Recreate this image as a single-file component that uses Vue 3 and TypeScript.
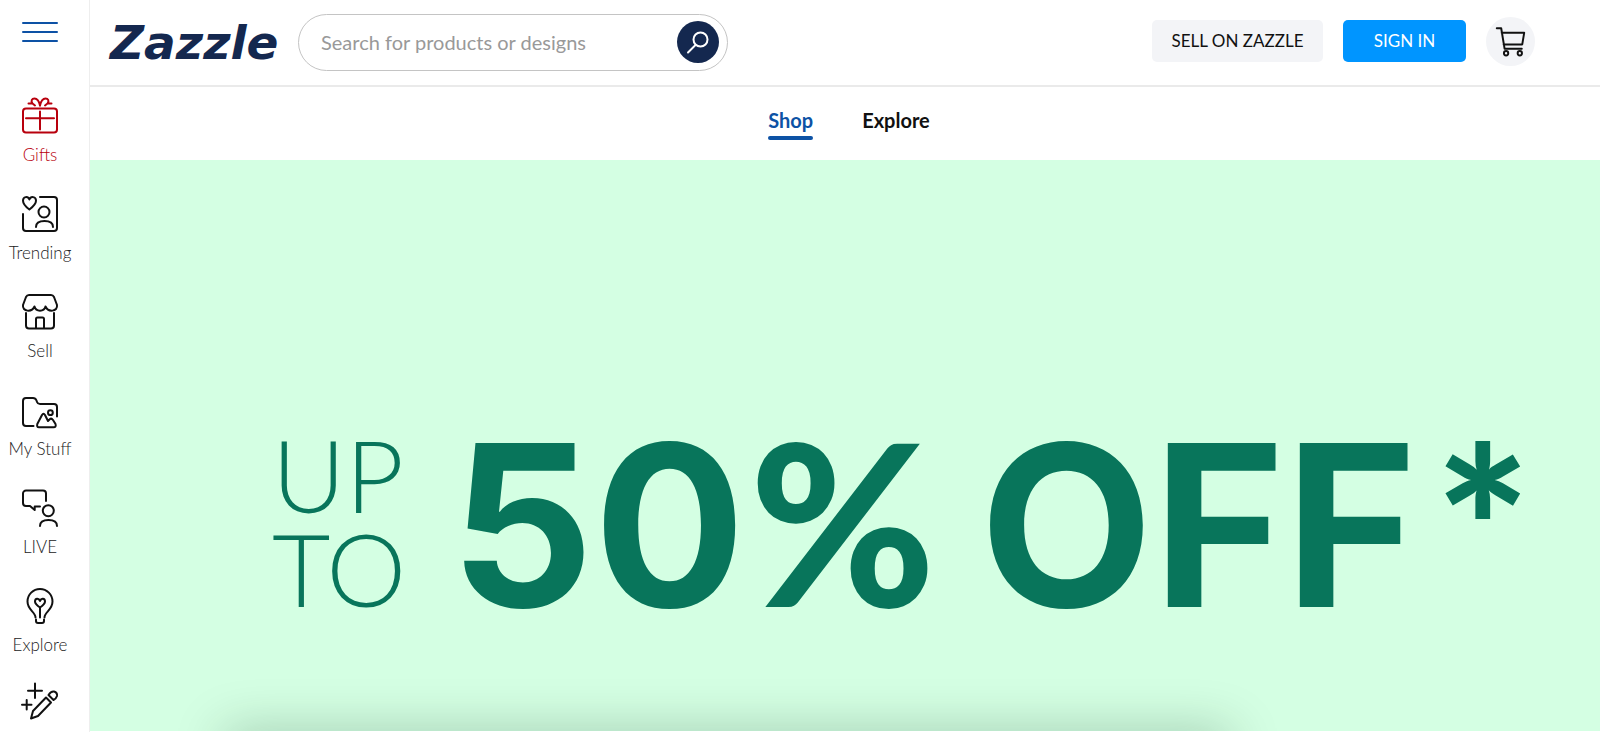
<script setup lang="ts">
import { ref } from 'vue'

interface RailItem {
  label: string
  iconOnly?: boolean
  accent?: boolean
  paths: string[]
}

const query = ref('')

const railItems: RailItem[] = [
  {
    label: 'Gifts',
    accent: true,
    paths: [
      'M6 12.5H34a3 3 0 0 1 3 3V33.500a3 3 0 0 1-3 3H6a3 3 0 0 1-3-3V15.500a3 3 0 0 1 3-3Z',
      'M6 22.300H34M20 15.500V33.500',
      'M20 9.500C19 5 17 2.500 14.500 2.500C12 2.500 10.500 4.500 12.500 7.500L15 9.500M8.500 7.500H12.500',
      'M20 9.500C21 5 23 2.500 25.500 2.500C28 2.500 29.500 4.500 27.500 7.500L25 9.500M31.500 7.500H27.500',
    ],
  },
  {
    label: 'Trending',
    paths: [
      'M9.400 15.500C5.500 12.500 3 10 3 6.700C3 2.500 8 1.800 9.400 5.500C10.800 1.800 16 2.500 16 6.700C16 10 13.300 12.500 9.400 15.500Z',
      'M20 3H34a3 3 0 0 1 3 3V34a3 3 0 0 1-3 3H6a3 3 0 0 1-3-3V20',
      'M18.500 18a5.500 5.500 0 1 0 11 0a5.500 5.500 0 1 0-11 0',
      'M16 33C16 29 19.500 27 24.500 27S33 29 33 33',
    ],
  },
  {
    label: 'Sell',
    paths: [
      'M3 13L6 5Q7 3 9 3H31Q33 3 34 5L37 13C38 20 28 20.500 25.500 14.500C24 20 16 20 14.500 14.500C12 20.500 2 20 3 13Z',
      'M6 21V33.500a3 3 0 0 0 3 3H31a3 3 0 0 0 3-3V21',
      'M16 36V27Q16 25.500 17.500 25.500H22.500Q24 25.500 24 27V36',
    ],
  },
  {
    label: 'My Stuff',
    paths: [
      'M13.500 36H6a3 3 0 0 1-3-3V11a3 3 0 0 1 3-3H13Q15.500 8 16.500 10.500L17 12Q17.700 14 20 14H34a3 3 0 0 1 3 3V26.500',
      'M17.300 34L22 25Q23.500 22.500 25 25L28 31L30 29Q31.500 28 33 30L35.500 34Q36.500 37.300 33.500 37.300H19Q16.500 37.300 17.300 34Z',
      'M28 22.700a2.400 2.400 0 1 0 4.800 0a2.400 2.400 0 1 0-4.800 0',
    ],
  },
  {
    label: 'LIVE',
    paths: [
      'M26 13V5.500a3 3 0 0 0-3-3H6a3 3 0 0 0-3 3V15a3 3 0 0 0 3 3H10L14.700 22V18.500H20',
      'M22.800 22.700a5.500 5.500 0 1 0 11 0a5.500 5.500 0 1 0-11 0',
      'M20 38C20 34 23 32 28.500 32S37 34 37 38',
    ],
  },
  {
    label: 'Explore',
    paths: [
      'M15.500 31.500C15.500 26 7.500 24 7.500 15.500a12.500 12.500 0 0 1 25 0C32.500 24 24.500 26 24.500 31.500',
      'M20 21.500C17 19.500 15 18 15 15.500C15 12 19 12 20 15C21 12 25 12 25 15.500C25 18 23 19.500 20 21.500V31.500',
      'M16 33.500V35Q16 37 18 37H22Q24 37 24 35V33.500',
    ],
  },
  {
    label: 'Create',
    iconOnly: true,
    paths: [
      'M15 -.500V14M8 6.700H22M6.700 16V25.500M2 20.700H11.500',
      'M11 34.500L13 27L26 13.500L31 18.500L18 32L11 34.500Z',
      'M28.500 11Q31 7 34 7.500Q37.500 8.500 37 12Q36 15 33.500 16L28.500 11Z',
    ],
  },
]

const tabs = [
  { label: 'Shop', active: true },
  { label: 'Explore', active: false },
]
</script>

<template>
  <div class="page">
    <aside class="rail">
      <button class="menu" type="button" aria-label="Menu">
        <span></span><span></span><span></span>
      </button>
      <nav class="rail-nav" aria-label="Sections">
        <a
          v-for="item in railItems"
          :key="item.label"
          href="#"
          class="rail-item"
          :class="{ accent: item.accent }"
          :aria-label="item.label"
        >
          <svg viewBox="0 0 40 40" aria-hidden="true">
            <path v-for="d in item.paths" :key="d" :d="d" />
          </svg>
          <span v-if="!item.iconOnly">{{ item.label }}</span>
        </a>
      </nav>
    </aside>

    <div class="main">
      <header class="topbar">
        <a class="logo" href="#">Zazzle</a>
        <form class="search" role="search" @submit.prevent>
          <input
            v-model="query"
            type="text"
            aria-label="Search for products or designs"
            placeholder="Search for products or designs"
          />
          <button type="submit" aria-label="Search">
            <svg viewBox="0 0 42 42" aria-hidden="true">
              <circle cx="23.500" cy="18.500" r="7" />
              <path d="M18.500 24L11 31.500" />
            </svg>
          </button>
        </form>
        <div class="actions">
          <button class="btn sell" type="button">SELL ON ZAZZLE</button>
          <button class="btn signin" type="button">SIGN IN</button>
          <button class="cart" type="button" aria-label="Cart">
            <svg viewBox="0 0 50 50" aria-hidden="true">
              <path d="M11 11.500H15.500L19 32.500H36.500M16 16H39L37 28H18" />
              <circle cx="20.500" cy="37" r="2.200" />
              <circle cx="34.500" cy="37" r="2.200" />
            </svg>
          </button>
        </div>
      </header>

      <nav class="tabs" aria-label="Browse">
        <a v-for="tab in tabs" :key="tab.label" href="#" :class="{ active: tab.active }">{{ tab.label }}</a>
      </nav>

      <section class="hero">
        <h1>
          <span class="upto">UP<br />TO</span>
          <span class="amount">50<span class="percent">%</span></span>
          <span class="off">OFF</span>
          <span class="star">*</span>
        </h1>
        <div class="shade" aria-hidden="true"></div>
      </section>
    </div>
  </div>
</template>

<style>
body {
  margin: 0;
  background: #fff;
}
</style>

<style scoped>
.page {
  display: flex;
  height: 100vh;
  overflow: hidden;
  background: #fff;
  color: #111;
  font-family: Lato, "Open Sans", "Liberation Sans", sans-serif;
}
a {
  color: inherit;
  text-decoration: none;
}
button {
  font: inherit;
  border: 0;
  padding: 0;
  cursor: pointer;
}
svg {
  display: block;
  fill: none;
  stroke: currentColor;
  stroke-width: 2;
  stroke-linecap: round;
  stroke-linejoin: round;
  overflow: visible;
}
.rail {
  box-sizing: border-box;
  flex: none;
  width: 90px;
  padding-right: 9px;
  border-right: 1px solid #eee;
  overflow: hidden;
}
.menu {
  display: flex;
  flex-direction: column;
  gap: 7px;
  width: 36px;
  margin: 22px auto 54px 22px;
  background: none;
}
.menu span {
  height: 2px;
  border-radius: 1px;
  background: #0d52a5;
}
.rail-item {
  display: flex;
  flex-direction: column;
  align-items: center;
  gap: 8px;
  height: 98px;
  color: #111;
}
.rail-item svg {
  flex: none;
  width: 40px;
  height: 40px;
}
.rail-item span {
  font-size: 17px;
  line-height: 22px;
  font-weight: 300;
  color: #222;
}
.rail-item.accent,
.rail-item.accent span {
  color: #b8000d;
}
.main {
  display: flex;
  flex: 1;
  flex-direction: column;
  min-width: 0;
  padding-bottom: 1px;
}
.topbar {
  box-sizing: border-box;
  flex: none;
  display: flex;
  align-items: center;
  height: 87px;
  padding: 0 65px 3px 20px;
  border-bottom: 2px solid #eaeaea;
}
.logo {
  width: 188px;
  padding-top: 4px;
  font-family: "DejaVu Sans", sans-serif;
  font-size: 47px;
  line-height: 56px;
  font-weight: 700;
  font-style: italic;
  color: #14284f;
}
.search {
  box-sizing: border-box;
  display: flex;
  align-items: center;
  width: 430px;
  height: 57px;
  margin-top: 2px;
  padding: 0 8px 0 22px;
  border: 1px solid #c4c4c4;
  border-radius: 29px;
}
.search input {
  flex: 1;
  min-width: 0;
  padding: 0;
  border: 0;
  outline: 0;
  background: none;
  font: 400 20px/24px Lato, "Open Sans", sans-serif;
  color: #111;
}
.search input::placeholder {
  color: #999;
  opacity: 1;
}
.search button {
  width: 42px;
  height: 42px;
  border-radius: 50%;
  background: #14284f;
  color: #fff;
}
.actions {
  display: flex;
  align-items: center;
  gap: 20px;
  margin-left: auto;
}
.btn {
  height: 42px;
  border-radius: 5px;
  font-size: 17px;
  line-height: 20px;
}
.sell {
  width: 171px;
  background: #f3f4f7;
  color: #111;
}
.signin {
  width: 123px;
  background: #0095ff;
  color: #fff;
}
.cart {
  width: 49px;
  height: 49px;
  border-radius: 50%;
  background: #f3f4f7;
  color: #111;
}
.tabs {
  flex: none;
  display: flex;
  justify-content: center;
  align-items: flex-start;
  gap: 49px;
  height: 53px;
  padding: 20px 0 0 8px;
}
.tabs a {
  font-size: 20px;
  line-height: 26px;
  font-weight: 700;
}
.tabs a::after {
  content: "";
  display: block;
  height: 4px;
  margin-top: 3px;
  border-radius: 2px;
}
.tabs .active {
  color: #0d52a5;
}
.tabs .active::after {
  background: #0d52a5;
}
.hero {
  position: relative;
  flex: 1;
  min-height: 0;
  overflow: hidden;
  background: #d4ffe3;
  color: #08755b;
}
h1 {
  display: flex;
  align-items: flex-start;
  margin: 0;
  padding: 250px 0 0 182px;
  font-family: Inter, "Open Sans", sans-serif;
  font-weight: 700;
  font-size: 225px;
  line-height: 230px;
}
.upto {
  width: 130px;
  margin-right: 48px;
  padding-top: 17px;
  font-family: Lato, "Open Sans", sans-serif;
  font-size: 101px;
  line-height: 94px;
  font-weight: 300;
  text-align: center;
}
.percent,
.star {
  font-family: Lato, "Open Sans", sans-serif;
  font-weight: 900;
}
.percent {
  margin-left: 4px;
  line-height: 0;
}
.off {
  margin-left: 44px;
}
.star {
  margin-left: 18px;
}
.shade {
  position: absolute;
  top: 100%;
  left: 135px;
  right: 370px;
  height: 40px;
  box-shadow: 0 0 50px rgba(0, 40, 20, 0.25);
}
</style>
